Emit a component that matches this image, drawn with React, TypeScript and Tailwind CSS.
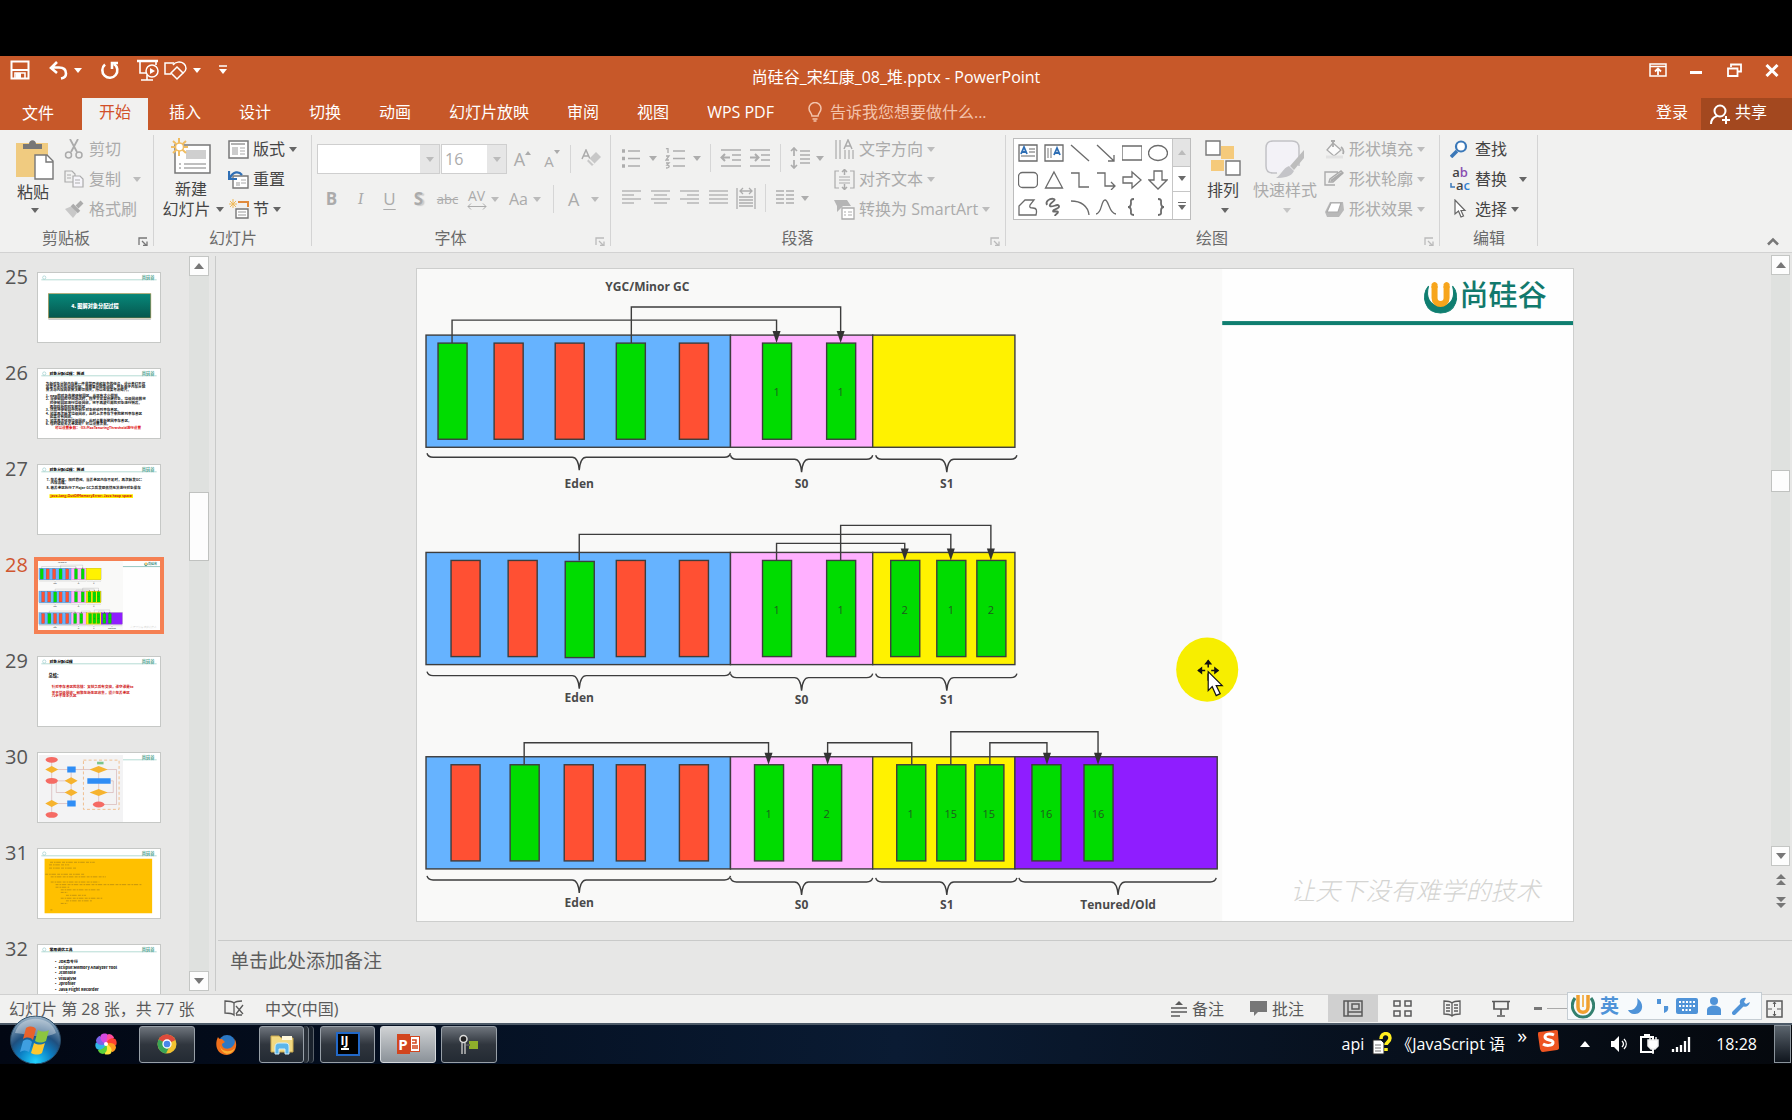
import React from "react";

type P = { className?: string };

const Svg = ({ w, h, className = "", children }: { w: number; h: number; className?: string; children: React.ReactNode }) => (
  <svg width={w} height={h} viewBox={`0 0 ${w} ${h}`} fill="none" stroke="currentColor" className={`shrink-0 ${className}`} aria-hidden="true">
    {children}
  </svg>
);

const Down = ({ className = "" }: P) => (
  <Svg w={8} h={5} className={className}><path d="M0 0h8L4 5z" fill="currentColor" stroke="none" /></Svg>
);
const Up = ({ className = "" }: P) => (
  <Svg w={10} h={6} className={className}><path d="M0 6h10L5 0z" fill="currentColor" stroke="none" /></Svg>
);
const Sep = ({ className = "" }: P) => <span className={`h-7 w-px shrink-0 bg-[#d6d6d6] ${className}`} />;

/* ---------- Title bar ---------- */

function TitleBar() {
  return (
    <div className="relative flex h-[42px] items-start text-white">
      <div className="flex h-[28px] items-center pl-[10px]">
        <button aria-label="保存">
          <Svg w={20} h={20}><path d="M1.500 1.500h17v17h-17z" strokeWidth="2" /><path d="M2 10h16" strokeWidth="2" /><path d="M5 18v-5h10v5" strokeWidth="1.600" /><path d="M6 13h5v5H6z" fill="currentColor" stroke="none" /></Svg>
        </button>
        <button aria-label="撤消" className="ml-[18px] flex items-center gap-[6px]">
          <Svg w={20} h={20}><path d="M9 2L3 8l6 5M3 7.500h8c4 0 7 2 7 6 0 3-2 4.500-5 5" strokeWidth="2.600" /></Svg>
          <Down className="text-white" />
        </button>
        <button aria-label="重复" className="ml-[18px]">
          <Svg w={20} h={20}><path d="M5 4.500A7.500 7.500 0 1 0 14 4M12 9V3h6" strokeWidth="2.600" /></Svg>
        </button>
        <button aria-label="从头开始" className="ml-[17px]">
          <Svg w={24} h={22}><path d="M0 2h21" strokeWidth="2.500" /><path d="M3 3v11h6M19 3v3" strokeWidth="1.600" /><circle cx="15" cy="12" r="6" strokeWidth="1.500" /><path d="M13 9l5 3-5 3z" fill="currentColor" stroke="none" /><path d="M10 16v5M4 21h12" strokeWidth="1.600" /></Svg>
        </button>
        <button aria-label="形状" className="ml-[3px] flex items-center gap-[5px]">
          <Svg w={24} h={22}><path d="M10 4H1v11h6" strokeWidth="1.500" /><path d="M9 6a7 6 0 1 1 10 8" strokeWidth="1.500" /><path d="M13 8l6 6-6 6-6-6z" strokeWidth="1.500" /></Svg>
          <Down />
        </button>
        <button aria-label="自定义快速访问工具栏" className="ml-[18px]">
          <Svg w={8} h={10}><path d="M0 1h8" strokeWidth="1.500" /><path d="M0 4h8L4 9z" fill="currentColor" stroke="none" /></Svg>
        </button>
      </div>
      <h1 className="pointer-events-none absolute inset-x-0 top-[9px] text-center text-[16px] leading-6">尚硅谷_宋红康_08_堆.pptx - PowerPoint</h1>
      <div className="ml-auto flex h-[28px] items-center pr-[13px]">
        <button aria-label="功能区显示选项" className="mr-[23px]">
          <Svg w={18} h={14}><path d="M1 1h16v12H1zM1 3.500h16" strokeWidth="1.500" /><path d="M9 12V6M6 8.500L9 5.500l3 3" strokeWidth="1.800" /></Svg>
        </button>
        <button aria-label="最小化" className="mr-[25px] pt-1"><Svg w={12} h={3}><path d="M0 1.500h12" strokeWidth="3" /></Svg></button>
        <button aria-label="还原" className="mr-[23px]">
          <Svg w={15} h={14}><path d="M4 4V1.500h10v7h-3" strokeWidth="1.800" /><path d="M1 5.500h9.500v7.500H1z" strokeWidth="1.800" /></Svg>
        </button>
        <button aria-label="关闭"><Svg w={14} h={13}><path d="M1.500 1l11 11M12.500 1l-11 11" strokeWidth="3" /></Svg></button>
      </div>
    </div>
  );
}

const tabs = ["开始", "插入", "设计", "切换", "动画", "幻灯片放映", "审阅", "视图", "WPS PDF"];

function Tabs() {
  return (
    <div className="flex h-8 items-stretch text-[16px] leading-[28px] text-white">
      <button className="w-[82px] pr-[6px] pb-[3px] text-center">文件</button>
      <nav className="flex gap-1">
        {tabs.map((t, i) => (
          <button key={t} className={i === 0 ? "bg-[#f1f1f0] px-[17px] pb-1 text-[#d2502a]" : "px-[17px] pb-1"}>{t}</button>
        ))}
      </nav>
      <label className="ml-[17px] flex items-center gap-2 pb-1 text-[#f3c3ac]">
        <Svg w={14} h={20}><path d="M4 14c0-3-3-4-3-7.500a6 6 0 0 1 12 0C13 10 10 11 10 14zM4.500 17h5M5.500 19h3" strokeWidth="1.500" /></Svg>
        <input aria-label="告诉我您想要做什么" placeholder="告诉我您想要做什么..." className="w-[180px] bg-transparent outline-none placeholder:text-[#f3c3ac]" />
      </label>
      <button className="ml-auto mr-[13px] pb-1">登录</button>
      <button className="flex w-[91px] items-center gap-[5px] bg-[#a3481f] pb-1 pl-[9px]">
        <Svg w={20} h={21} className="mt-1"><circle cx="10" cy="7" r="5.500" strokeWidth="2" /><path d="M1 20c0-5 3-7 6-8M12 16h8M16 12v8" strokeWidth="2" /></Svg>
        共享
      </button>
    </div>
  );
}

/* ---------- Ribbon ---------- */

function Group({ label, className, launcher, children }: { label: string; className: string; launcher?: string; children: React.ReactNode }) {
  return (
    <section aria-label={label} className={`relative flex shrink-0 flex-col ${className}`}>
      <div className="flex h-[94px] pt-1">{children}</div>
      <div className={`flex h-[29px] items-center justify-center text-[#6a6a6a] ${launcher ? "pr-[22px]" : ""}`}>{label}</div>
      {launcher && (
        <button aria-label={`${label}设置`} className={`absolute right-[6px] bottom-[6px] ${launcher}`}>
          <Svg w={10} h={9}><path d="M1 8V1h8M4 4l4 4M9 4.500V8.500H5" strokeWidth="1.300" /></Svg>
        </button>
      )}
      <span className="absolute top-[5px] right-0 h-[111px] w-px bg-[#d4d4d4]" />
    </section>
  );
}

function Cmd({ icon, text, arrow, off, gap = "ml-2" }: { icon: React.ReactNode; text: string; arrow?: boolean; off?: boolean; gap?: string }) {
  return (
    <button className={`flex h-[30px] items-center whitespace-nowrap ${off ? "text-[#ababab]" : "text-[#444]"}`}>
      <span className="flex w-[25px] shrink-0">{icon}</span>
      {text}
      {arrow && <Down className={`${gap} ${off ? "text-[#bcbcbc]" : "text-[#666]"}`} />}
    </button>
  );
}

const I = {
  cut: <Svg w={20} h={20}><path d="M6 0l7 13M14 0L7 13" strokeWidth="1.800" /><circle cx="4.500" cy="16" r="3" strokeWidth="1.500" /><circle cx="15" cy="16" r="3" strokeWidth="1.500" /></Svg>,
  copy: <Svg w={20} h={18}><path d="M1 1h7l3 3v8H1zM3 5h4M3 8h4" strokeWidth="1.200" /><path d="M9 6h7l3 3v8H9z" fill="#f6f5fa" strokeWidth="1.200" /><path d="M11 10h5M11 13h5" /></Svg>,
  brush: <Svg w={20} h={18}><path d="M1 9l7-3 5 7-4 5z" fill="#c8c8c8" stroke="none" /><path d="M8 5l7 7" strokeWidth="3.500" /><path d="M13 7l5-5" strokeWidth="4" /></Svg>,
  layout: <Svg w={21} h={19}><path d="M1 1h19v17H1z" fill="#fff" strokeWidth="1.500" stroke="#777" /><path d="M3 4h14" stroke="#999" strokeWidth="1.500" /><path d="M4 7h6v8H4z" fill="#ccc" stroke="none" /><path d="M12 8h5M12 11h5M12 14h5" stroke="#aaa" strokeWidth="1.200" /></Svg>,
  reset: <Svg w={21} h={19}><path d="M5 6h15v12H5z" fill="#fff" stroke="#777" strokeWidth="1.400" /><path d="M8 12h4v4H8z" fill="#ccc" stroke="none" /><path d="M13 10h5M13 13h5" stroke="#aaa" /><path d="M1 1v8h8M2 8c3-7 9-7 12-3" stroke="#2f6fb5" strokeWidth="2.200" /></Svg>,
  section: <Svg w={21} h={20}><path d="M5 0v9M1 5h8M2 2l6 6M8 2L2 8" stroke="#efb95a" /><path d="M10 3h10v5" stroke="#e08a3c" strokeWidth="2" /><path d="M8 10h12v9H8z" stroke="#777" strokeWidth="1.400" fill="#fff" /><path d="M10 13h8M10 16h8" stroke="#999" /></Svg>,
  dir: <Svg w={21} h={21}><path d="M2 1v19M6 1v19M11 11v9M15 11v9M19 11v9" strokeWidth="1.200" /><path d="M10 10l4-9 4 9M11.500 7h5" strokeWidth="1.500" /></Svg>,
  alignText: <Svg w={21} h={21}><path d="M5 2H1v17h4M16 2h4v17h-4M5 8h11M5 11h11M5 14h11" strokeWidth="1.200" /><path d="M10.500 6V1M8 3l2.500-2.500L13 3M10.500 15v5M8 18l2.500 2.500L13 18" strokeWidth="1.500" /></Svg>,
  smart: <Svg w={21} h={21}><path d="M0 1h13l4 6H9l-6 6V7z" fill="#b5b5b5" stroke="none" /><path d="M8 9h12v11H8z" fill="#fff" strokeWidth="1.300" /><path d="M10 13h2M14 13h4M10 16h2M14 16h4" /></Svg>,
  fill: <Svg w={21} h={20}><path d="M9 4l8 7-7 6-7-6z" fill="#fbfbfb" strokeWidth="1.300" /><path d="M9 8V1M7 2h4M17 8c3 2 3 4 2 7" strokeWidth="1.800" /><path d="M2 18h17" stroke="#e2e2e2" strokeWidth="3" /></Svg>,
  outline: <Svg w={21} h={19}><path d="M14 2H1v13h10M5 12l1-3 11-8 2 2L9 12z" strokeWidth="1.400" /><path d="M7 11l11-8" strokeWidth="2.500" /></Svg>,
  effect: <Svg w={21} h={19}><path d="M6 2h13l1 8-5 7H3L1 12z" fill="#b9b9b9" stroke="none" /><path d="M7 3h10l-3 9H3z" fill="#fff" strokeWidth="1.200" /></Svg>,
  find: <Svg w={18} h={18} className="text-[#3b78b8]"><circle cx="11" cy="6.500" r="5" strokeWidth="2.200" fill="#fff" /><path d="M7 11l-6 6" strokeWidth="3.500" /></Svg>,
  select: <Svg w={18} h={20}><path d="M5 1v14l3.500-3L11 18l2.500-1L11 11.500h4z" fill="#fff" stroke="#666" strokeWidth="1.200" /></Svg>,
  replace: (
    <span className="flex flex-col text-[13px] leading-[13px] font-semibold">
      <span>a<span className="text-[#8a4fb0]">b</span></span>
      <span className="flex items-center"><Svg w={6} h={6}><path d="M1 0v4h4" stroke="#3b78b8" strokeWidth="1.500" /></Svg>a<span className="text-[#2f7fd0]">c</span></span>
    </span>
  ),
};

const Lines = ({ rows }: { rows: [number, number][] }) => (
  <Svg w={20} h={18}>{rows.map(([a, b], i) => <path key={i} d={`M${a} ${2 + i * 4}H${b}`} strokeWidth="1.300" />)}</Svg>
);

function FontGroup() {
  return (
    <Group label="字体" className="w-[299px]" launcher="text-[#bbb]">
      <div className="flex flex-col gap-[10px] pt-[10px] pl-[5px] text-[#ababab]">
        <div className="flex h-[30px] items-center">
          <span className="relative flex h-[30px] w-[123px] border border-[#cfcfcf] bg-white">
            <select aria-label="字体名称" className="h-full w-full appearance-none bg-transparent pl-1"><option></option></select>
            <span className="pointer-events-none flex w-[19px] shrink-0 items-center justify-center bg-[#e6e6e6]"><Down className="text-[#bbb]" /></span>
          </span>
          <span className="relative ml-px flex h-[30px] w-[66px] border border-[#cfcfcf] bg-white">
            <select aria-label="字号" className="h-full w-full appearance-none bg-transparent pl-[3px] text-[16px]"><option>16</option></select>
            <span className="pointer-events-none flex w-[19px] shrink-0 items-center justify-center bg-[#e6e6e6]"><Down className="text-[#bbb]" /></span>
          </span>
          <button aria-label="增大字号" className="flex w-[31px] justify-center"><span className="text-[18px]">A</span><Svg w={6} h={4} className="mt-1"><path d="M0 4h6L3 0z" fill="currentColor" stroke="none" /></Svg></button>
          <button aria-label="减小字号" className="flex w-[28px] justify-center"><span className="pt-[3px] text-[15px]">A</span><Svg w={6} h={4} className="mt-1"><path d="M0 0h6L3 4z" fill="currentColor" stroke="none" /></Svg></button>
          <Sep className="mx-1" />
          <button aria-label="清除格式" className="ml-[6px]"><Svg w={20} h={20}><path d="M1 10L5 1l4 9M2.500 7h5" strokeWidth="1.500" /><path d="M6 12l9-9 5 5-9 9z" fill="#c8c8c8" stroke="none" /><path d="M8 10l5 5" stroke="#f1f1f0" strokeWidth="1.500" /></Svg></button>
        </div>
        <div className="flex h-[30px] items-center text-[17px]">
          <button aria-label="加粗" className="w-[29px] font-bold">B</button>
          <button aria-label="倾斜" className="w-[29px] font-serif italic">I</button>
          <button aria-label="下划线" className="w-[29px] underline underline-offset-4">U</button>
          <button aria-label="文字阴影" className="w-[29px] font-bold text-shadow-[2px_1px_1px_#ccc]">S</button>
          <button aria-label="删除线" className="w-[29px] text-[13px] line-through">abc</button>
          <button aria-label="字符间距" className="flex w-[29px] flex-col items-center text-[14px] leading-[14px]">AV<Svg w={20} h={7}><path d="M1 3.500h18M4 .5l-3 3 3 3M16 .5l3 3-3 3" /></Svg></button>
          <Down className="text-[#bbb]" />
          <button aria-label="更改大小写" className="ml-[10px] flex items-center gap-[5px] text-[16px]">Aa<Down className="text-[#bbb]" /></button>
          <Sep className="ml-[12px]" />
          <button aria-label="字体颜色" className="ml-[14px] flex items-center gap-3 text-[18px]">A<Down className="text-[#bbb]" /></button>
        </div>
      </div>
    </Group>
  );
}

function ParagraphGroup() {
  return (
    <Group label="段落" className="w-[395px]" launcher="text-[#bbb]">
      <div className="flex w-[223px] shrink-0 flex-col gap-[10px] pt-[9px] pl-[10px] text-[#adadad]">
        <div className="flex h-[30px] items-center">
          <button aria-label="项目符号" className="flex items-center gap-2"><Svg w={20} h={21}><path d="M7 3h12M7 10.500h12M7 18h12" strokeWidth="1.300" /><path d="M1 3h3M1 10.500h3M1 18h3" strokeWidth="3.500" /></Svg><Down /></button>
          <button aria-label="编号" className="ml-2 flex items-center gap-2">
            <Svg w={20} h={21}><path d="M8 3h12M8 10.500h12M8 18h12" strokeWidth="1.300" /><path d="M1 1l2-1v5M1 8h3l-3 4h3M1 15h3l-2 2c3 0 3 3-1 3" strokeWidth="1.300" /></Svg><Down />
          </button>
          <Sep className="mx-[9px]" />
          <button aria-label="减少缩进"><Svg w={22} h={20}><path d="M1 2h20M12 7h9M12 12h9M1 18h20" strokeWidth="1.300" /><path d="M10 9.500H2M5 6L1.500 9.500 5 13" strokeWidth="2" /></Svg></button>
          <button aria-label="增加缩进" className="ml-[7px]"><Svg w={22} h={20}><path d="M1 2h20M12 7h9M12 12h9M1 18h20" strokeWidth="1.300" /><path d="M1 9.500h8M6 6l3.500 3.500L6 13" strokeWidth="2" /></Svg></button>
          <Sep className="mx-[9px]" />
          <button aria-label="行距" className="flex items-center gap-[6px]"><Svg w={20} h={22}><path d="M4 1v8M1 4l3-3 3 3M4 13v8M1 18l3 3 3-3" strokeWidth="1.700" /><path d="M10 4h10M10 8h10M10 12h10M10 16h10" strokeWidth="1.300" /></Svg><Down /></button>
        </div>
        <div className="flex h-[30px] items-center">
          <button aria-label="左对齐" className="mr-[9px]"><Lines rows={[[1, 20], [1, 13], [1, 20], [1, 13]]} /></button>
          <button aria-label="居中" className="mr-[9px]"><Lines rows={[[1, 20], [4, 17], [1, 20], [4, 17]]} /></button>
          <button aria-label="右对齐" className="mr-[9px]"><Lines rows={[[1, 20], [8, 20], [1, 20], [8, 20]]} /></button>
          <button aria-label="两端对齐" className="mr-[8px]"><Lines rows={[[1, 20], [1, 20], [1, 20], [1, 20]]} /></button>
          <button aria-label="分散对齐"><Svg w={20} h={22}><path d="M1 1v21M19 1v21M4 4h12M7 1L4 4l3 3M13 1l3 3-3 3M3 10h14M3 13h14M3 16h14M3 19h14" strokeWidth="1.300" /></Svg></button>
          <Sep className="mx-[9px]" />
          <button aria-label="分栏" className="flex items-center gap-[6px]"><Svg w={20} h={18}><path d="M1 2h8M1 6h8M1 10h8M1 14h8M11 2h8M11 6h8M11 10h8M11 14h8" strokeWidth="1.500" /></Svg><Down /></button>
        </div>
      </div>
      <div className="flex flex-col">
        <Cmd off arrow gap="ml-1" icon={I.dir} text="文字方向" />
        <Cmd off arrow gap="ml-1" icon={I.alignText} text="对齐文本" />
        <Cmd off arrow gap="ml-1" icon={I.smart} text="转换为 SmartArt" />
      </div>
    </Group>
  );
}

const shapes: [string, React.ReactNode][] = [
  ["文本框", <><path d="M1 2h18v16H1z" /><path d="M3 11l3-7 3 7M4 9h4" stroke="#2f6fb5" strokeWidth="1.800" /><path d="M11 6h6M11 9h6M3 13h14" stroke="#999" /></>],
  ["竖排文本框", <><path d="M1 2h18v16H1z" /><path d="M4 5v10M7 5v10" stroke="#999" /><path d="M10 12l3-7 3 7M11 10h4" stroke="#2f6fb5" strokeWidth="1.800" /></>],
  ["直线", <path d="M1 2l18 16" />],
  ["箭头", <path d="M1 2l17 16M18 12v6h-6" />],
  ["矩形", <path d="M0 3h20v14H0z" />],
  ["椭圆", <ellipse cx="10" cy="10" rx="9.500" ry="7.500" />],
  ["圆角矩形", <rect x="0.500" y="2.500" width="19" height="15" rx="4" />],
  ["三角形", <path d="M10 2l8.500 16h-17z" />],
  ["肘形连接符", <path d="M1 3h8v14h10" />],
  ["肘形箭头", <path d="M1 3h8v13h10M15 12l4 4-4 4" />],
  ["右箭头", <path d="M1 7h9V2l9 8-9 8v-5H1z" />],
  ["下箭头", <path d="M6 1v9H1l9 9 9-9h-5V1z" />],
  ["任意多边形", <path d="M1 18V9l6-6h9l-4 5c-1 3 1 3 3 3 4 0 4 3 3 7z" />],
  ["自由曲线", <path d="M3 8c-2-4 3-7 7-6 3 1-6 5-4 7s8-3 9 0-6 3-6 5 5-1 5 1-3 2-3 4" strokeWidth="1.800" />],
  ["弧形", <path d="M1 4c10 0 17 5 18 14" />],
  ["曲线", <path d="M0 17C6 17 5 3 9 3s4 14 11 14" />],
  ["左大括号", <path d="M12 2c-4 0-3 2-3 4s0 4-3 4c3 0 3 2 3 4s-1 4 3 4" strokeWidth="1.800" />],
  ["右大括号", <path d="M10 2c4 0 3 2 3 4s0 4 3 4c-3 0-3 2-3 4s1 4-3 4" strokeWidth="1.800" />],
];

function DrawGroup() {
  return (
    <Group label="绘图" className="w-[434px]" launcher="text-[#bbb]">
      <div className="mt-1 ml-[7px] flex h-[82px] shrink-0 border border-[#bdbdbd] bg-white text-[#6b6b6b]">
        <div className="grid grid-cols-[repeat(6,26px)] px-px">
          {shapes.map(([n, d]) => (
            <button key={n} aria-label={n} className="flex h-[27px] items-center justify-center"><Svg w={20} h={20} className="[stroke-width:1.3]">{d}</Svg></button>
          ))}
        </div>
        <div className="grid w-[18px] grid-rows-3 border-l border-[#c6c6c6]">
          <button aria-label="上一行" className="flex items-center justify-center bg-[#e4e4e4] text-[#bbb]"><Down className="rotate-180" /></button>
          <button aria-label="下一行" className="flex items-center justify-center border-y border-[#c6c6c6]"><Down /></button>
          <button aria-label="其他" className="flex flex-col items-center justify-center gap-0.5"><span className="h-px w-2 bg-[#6b6b6b]" /><Down /></button>
        </div>
      </div>
      <button className="ml-[16px] flex w-[32px] shrink-0 flex-col items-center pt-[6px] text-[#444]">
        <Svg w={36} h={36}>
          <path d="M16 6h13v13H16zM6 20h13v11H6z" fill="#f5ca7b" stroke="none" />
          <path d="M1 1h14v14H1zM21 21h14v14H21z" fill="#fff" stroke="#777" strokeWidth="1.400" />
        </Svg>
        <span className="-mt-0.5 leading-8">排列</span>
        <Down className="mt-0.5 ml-1 text-[#666]" />
      </button>
      <button className="ml-[14px] flex w-[64px] shrink-0 flex-col items-center pt-[6px] whitespace-nowrap text-[#ababab]">
        <Svg w={40} h={38}>
          <path d="M12 33H8c-5 0-7-3-7-7V8c0-5 3-7 7-7h19c4 0 7 2 7 7v18" fill="#f3f2f7" stroke="#c2c2c6" strokeWidth="1.500" />
          <path d="M39 10v8L29 30l-4-4z" fill="#bdbdbd" stroke="none" /><path d="M24 26l5 5c-3 6-10 7-18 7 5-3 7-10 13-12z" fill="#c4c4c8" stroke="none" />
        </Svg>
        <span className="-mt-1 leading-8">快速样式</span>
        <Down className="mt-0.5 ml-1 text-[#c5c5c5]" />
      </button>
      <div className="ml-[7px] flex flex-col">
        <Cmd off arrow gap="ml-1" icon={I.fill} text="形状填充" />
        <Cmd off arrow gap="ml-1" icon={I.outline} text="形状轮廓" />
        <Cmd off arrow gap="ml-1" icon={I.effect} text="形状效果" />
      </div>
    </Group>
  );
}

function Ribbon() {
  return (
    <div className="relative flex h-[123px] overflow-hidden border-b border-[#d2d2d2] bg-[#f1f1f0] text-[16px] leading-6">
      <Group label="剪贴板" className="w-[154px]" launcher="text-[#777]">
        <button className="ml-4 flex w-[38px] flex-col items-center pt-[6px] text-[#444]">
          <Svg w={38} h={40}>
            <path d="M0 3h32v34H0z" fill="#f0cb80" stroke="none" />
            <path d="M7 9V4h6c0-5 7-5 7 0h6v5z" fill="#777" stroke="none" />
            <path d="M19 15h12l6 6v18H19z" fill="#fff" stroke="#777" strokeWidth="1.400" /><path d="M30 15v7h7" stroke="#777" strokeWidth="1.400" />
          </Svg>
          <span className="-mt-1 -ml-1 leading-8">粘贴</span>
          <Down className="text-[#666]" />
        </button>
        <div className="ml-[10px] flex flex-col">
          <Cmd off icon={I.cut} text="剪切" />
          <Cmd off arrow gap="ml-3" icon={I.copy} text="复制" />
          <Cmd off icon={I.brush} text="格式刷" />
        </div>
      </Group>
      <Group label="幻灯片" className="w-[158px]">
        <button className="ml-[5px] flex w-[64px] shrink-0 flex-col items-center pt-1 text-[#444]">
          <Svg w={40} h={37}>
            <path d="M4 7h35v28H4z" fill="#fff" stroke="#777" strokeWidth="1.500" />
            <path d="M15 12h20v9H15z" fill="#cfcfcf" stroke="none" /><path d="M8 26h2M13 26h22M8 30h2M13 30h22" stroke="#aaa" strokeWidth="1.400" />
            <path d="M8 0v18M0 9h17M2 3l13 12M15 3L2 15" stroke="#f0bd62" strokeWidth="2" /><circle cx="8.500" cy="9" r="4" fill="#fff" stroke="#f0bd62" strokeWidth="1.500" />
          </Svg>
          <span className="mt-1 leading-5">新建</span>
          <span className="flex items-center gap-[5px] pl-1 leading-5 whitespace-nowrap">幻灯片<Down className="text-[#666]" /></span>
        </button>
        <div className="ml-[5px] flex flex-col">
          <Cmd arrow icon={I.layout} text="版式" gap="ml-1" />
          <Cmd icon={I.reset} text="重置" />
          <Cmd arrow icon={I.section} text="节" gap="ml-1" />
        </div>
      </Group>
      <FontGroup />
      <ParagraphGroup />
      <DrawGroup />
      <Group label="编辑" className="w-[98px]">
        <div className="ml-[10px] flex flex-col">
          <Cmd icon={I.find} text="查找" />
          <Cmd arrow gap="ml-3" icon={I.replace} text="替换" />
          <Cmd arrow gap="ml-1" icon={I.select} text="选择" />
        </div>
      </Group>
      <button aria-label="折叠功能区" className="mt-auto mr-[13px] mb-[6px] ml-auto text-[#777]"><Svg w={12} h={9}><path d="M1 7.500l5-5 5 5" strokeWidth="2.500" /></Svg></button>
    </div>
  );
}

/* ---------- Slide drawing ---------- */

type Row = {
  top: number; bars: [number, string, string?, number?][]; links: [number, number, number][];
  braces: [number, number, number, string, number][]; tenured?: boolean;
};
const G = "#00dc00", R = "#ff5033";

const rows: Row[] = [
  {
    top: 335,
    bars: [[438, G], [494, R], [555, R], [616, G], [679, R], [762, G, "1"], [826, G, "1"]],
    links: [[452, 320, 776], [631, 307, 840]],
    braces: [[427, 730, 453, "Eden", 483], [730, 872, 455, "S0", 483], [875, 1016, 455, "S1", 483]],
  },
  {
    top: 552,
    bars: [[451, R], [508, R], [565, G, "", 1], [616, R], [679, R], [762, G, "1"], [826, G, "1"], [890, G, "2"], [936, G, "1"], [976, G, "2"]],
    links: [[579, 534, 950], [776, 543, 904], [840, 525, 990]],
    braces: [[427, 730, 671, "Eden", 696], [730, 872, 673, "S0", 698], [875, 1016, 673, "S1", 698]],
  },
  {
    top: 756,
    bars: [[451, R], [510, G], [564, R], [616, R], [679, R], [754, G, "1"], [812, G, "2"], [896, G, "1"], [936, G, "15"], [974, G, "15"], [1031, G, "16"], [1083, G, "16"]],
    links: [[524, 742, 768], [911, 742, 827], [950, 731, 1097], [989, 742, 1046]],
    braces: [[427, 730, 875, "Eden", 901], [730, 872, 877, "S0", 903], [875, 1016, 877, "S1", 903], [1018, 1215, 877, "Tenured/Old", 903]],
    tenured: true,
  },
];

function Slide({ cursor, className }: { cursor?: boolean; className: string }) {
  return (
    <svg viewBox="417 269 1155 651" className={className} role="img" aria-label="YGC/Minor GC" fontFamily="'Open Sans','Noto Sans CJK SC',sans-serif">
      <rect x="417" y="269" width="1155" height="651" fill="#fefefe" />
      <rect x="417" y="269" width="804" height="651" fill="#f9f9f8" />
      <text x="647" y="291" textAnchor="middle" fontSize="12" fontWeight="700" fill="#4a4a4a">YGC/Minor GC</text>
      {rows.map((r) => (
        <g key={r.top} stroke="#3d3d3d" strokeWidth="1.400">
          <rect x="426" y={r.top} width="304" height="112" fill="#66b3ff" />
          <rect x="730" y={r.top} width="142" height="112" fill="#ffb0ff" />
          <rect x="872" y={r.top} width="142" height="112" fill="#fff200" />
          {r.tenured && <rect x="1014" y={r.top} width="202" height="112" fill="#8f1dff" />}
          {r.bars.map(([x, c, n, dy = 0]) => (
            <g key={x}>
              <rect x={x} y={r.top + 8 + dy} width="29" height="96" fill={c} />
              {n && <text x={x + 14} y={r.top + 61} textAnchor="middle" fontSize="11" fill="#1f5a1f" stroke="none">{n}</text>}
            </g>
          ))}
          {r.links.map(([a, y, b]) => (
            <g key={a}>
              <path d={`M${a} ${r.top + 8}V${y}H${b}V${r.top + 4}`} fill="none" />
              <path d={`M${b - 4} ${r.top - 4}h8l-4 12z`} fill="#333" stroke="none" />
            </g>
          ))}
          {r.braces.map(([a, b, y, t, ly]) => {
            const m = Math.round((a + b) / 2);
            return (
              <g key={t}>
                <path d={`M${a} ${y}q1 4 6 4H${m - 7}q6 0 7 13q1-13 7-13H${b - 6}q5 0 6-4`} fill="none" />
                <text x={m} y={ly + 5} textAnchor="middle" fontSize="12" fontWeight="700" fill="#4a4a4a" stroke="none">{t}</text>
              </g>
            );
          })}
        </g>
      ))}
      <rect x="1221" y="321" width="351" height="4" fill="#0f7e70" />
      <path d="M1427 286c-8 9-4 27 12 27s20-18 12-27c3 11-1 20-12 20s-15-9-12-20z" fill="#0f7e70" stroke="#0f7e70" strokeWidth="1" />
      <path d="M1433 286v12c0 8 12 8 12 0v-12" fill="none" stroke="#f7a51c" strokeWidth="6" />
      <path d="M1430 284q3-4 6 0v4h-6zM1442 284q3-4 6 0v4h-6z" fill="#f7a51c" />
      <text x="1458" y="306" fontSize="29" fontWeight="500" fill="#12796c">尚硅谷</text>
      <text x="1289" y="899" fontSize="25" fontStyle="italic" fontWeight="300" fill="#d4d4d2">让天下没有难学的技术</text>
      {cursor && (
        <g>
          <ellipse cx="1206" cy="669" rx="31" ry="32" fill="#f7ee00" />
          <path d="M1207 660v20M1197 670h20" stroke="#111" strokeWidth="1.500" strokeDasharray="7 6" />
          <path d="M1203 664l4-5 4 5zM1201 666l-5 4 5 4zM1213 666l5 4-5 4z" fill="#111" />
          <path d="M1207 671v19l4-4 4 9 4-2-4-8h6z" fill="#fff" stroke="#111" strokeWidth="1.200" />
        </g>
      )}
    </svg>
  );
}

/* ---------- Thumbnails ---------- */

function Thumb({ title, children, back }: { title?: string; children: React.ReactNode; back?: React.ReactNode }) {
  return (
    <svg viewBox="0 0 372 213" className="block h-full w-full bg-white" fontFamily="'Noto Sans CJK SC',sans-serif" fontSize="11" fill="#222" aria-hidden="true">
      {back}
      <path d={title === undefined ? "M260 21h104" : "M8 21h356"} stroke="#8cc7bd" strokeWidth="2" />
      {title !== undefined && <circle cx="17" cy="14" r="5" fill="none" stroke="#9cc" strokeWidth="2" />}
      <text x="318" y="19" fontSize="13" fontWeight="700" fill="#5aa897">尚硅谷</text>
      <text x="33" y="19" fontSize="12" fontWeight="900" fill="#111">{title}</text>
      {children}
    </svg>
  );
}

const T = ({ x, y, c, children }: { x: number; y: number; c?: string; children: React.ReactNode }) => (
  <text x={x} y={y} fontWeight="700" fill={c}>{children}</text>
);

const slides: { n: number; body: React.ReactNode }[] = [
  {
    n: 25,
    body: (
      <Thumb title="">
        <defs><linearGradient id="banner" x1="0" y1="0" x2="0" y2="1"><stop offset="0" stopColor="#07887a" /><stop offset="1" stopColor="#06574e" /></linearGradient></defs>
        <rect x="30" y="64" width="316" height="75" fill="url(#banner)" stroke="#a98f45" strokeWidth="2" />
        <path d="M30 143h316" stroke="#ccc" strokeWidth="4" />
        <text x="100" y="108" fontSize="16" fontWeight="900" fill="#fff">4. 图解对象分配过程</text>
      </Thumb>
    ),
  },
  {
    n: 26,
    body: (
      <Thumb title="对象分配过程：概述">
        <T x={22} y={49}>为新对象分配内存是一件非常严谨和复杂的任务，设计者们不仅</T>
        <T x={22} y={58}>需要考虑内存如何分配、在哪里分配等问题，并且由于内存分配</T>
        <T x={22} y={67}>算法与内存回收算法密切相关，所以还需要考虑碎片。</T>
        <T x={22} y={86}>1. new的对象先放伊甸园区。此区有大小限制。</T>
        <T x={22} y={97}>2. 当伊甸园的空间填满时，程序又需要创建对象，垃圾回收器将</T>
        <T x={34} y={108}>对伊甸园区进行垃圾回收，将不再被引用的对象进行销毁。</T>
        <T x={34} y={119}>再加载新的对象放到区</T>
        <T x={22} y={130}>3. 然后将伊甸园中的剩余对象移动到幸存者区。</T>
        <T x={22} y={141}>4. 如果再次触发垃圾回收，此时上次幸存下来的放到幸存者区</T>
        <T x={34} y={152}>如果没有回收。</T>
        <T x={22} y={163}>5. 如果再次经历垃圾回收，此时会重新放回幸存者区。</T>
        <T x={22} y={174}>6. 啥时候能去养老区呢？可以设置次数。</T>
        <T x={50} y={186} c="#e01010">可以设置参数：-XX:MaxTenuringThreshold进行设置</T>
      </Thumb>
    ),
  },
  {
    n: 27,
    body: (
      <Thumb title="对象分配过程：概述">
        <T x={24} y={49}>7. 在养老区，相对悠闲。当养老区内存不足时，再次触发GC：</T>
        <T x={36} y={60}>内存清理。</T>
        <T x={24} y={74}>8. 若养老区执行了Major GC之后发现依然无法进行对象保存</T>
        <path d="M33 90h258v12H33z" fill="#ffee00" />
        <T x={36} y={100} c="#d02010">java.lang.OutOfMemoryError: Java heap space</T>
      </Thumb>
    ),
  },
  { n: 28, body: <Slide className="block h-full w-full" /> },
  {
    n: 29,
    body: (
      <Thumb title="对象分配过程">
        <text x="30" y="62" fontSize="13" fontWeight="900">总结：</text>
        <T x={40} y={97} c="#d02020">针对幸存者区的总结：复制之后有交换，谁空谁是to</T>
        <T x={40} y={114} c="#d02020">关于垃圾回收：频繁在新生区收集，很少在养老区</T>
        <T x={40} y={125} c="#d02020">几乎不在永久区</T>
      </Thumb>
    ),
  },
  {
    n: 30,
    body: (
      <Thumb back={<path d="M0 6h260v207H0z" fill="#f3f3f4" />}>
        <g fill="none" stroke="#c99" strokeWidth="1.500">
          <path d="M40 26v165M40 51h145M100 51v105M40 86h60M40 156h60M54 86v36h46M185 51v108M185 51h55v108h-55M220 86h10v36h-45" />
          <path d="M138 22h110v152H138z" stroke="#f0a45a" strokeWidth="2" strokeDasharray="9 7" />
        </g>
        <g fill="#f56b64"><ellipse cx="40" cy="21" rx="19" ry="9" /><ellipse cx="40" cy="86" rx="19" ry="9" /><ellipse cx="40" cy="191" rx="19" ry="9" /><ellipse cx="185" cy="159" rx="18" ry="9" /></g>
        <g fill="#f6b32e"><path d="M20 51l20-11 20 11-20 11zM20 156l20-11 20 11-20 11zM80 86l20-11 20 11-20 11zM80 122l20-11 20 11-20 11zM157 51l28-11 28 11-28 11zM157 122l28-11 28 11-28 11z" /></g>
        <g fill="#2f8df5"><path d="M88 42h26v18H88zM88 147h26v18H88zM150 78h72v17h-72z" /></g>
        <path d="M180 27h20v8h-20z" fill="#7cc48a" />
      </Thumb>
    ),
  },
  {
    n: 31,
    body: (
      <Thumb title="">
        <path d="M18 30h332v168H18z" fill="#ffc000" />
        <g stroke="#a87f12" strokeWidth="2" strokeDasharray="9 3 5 2 14 4">
          <path d="M35 41h138M32 49h62M32 59h86M20 78h120M37 86h170M37 102h150M52 110h265M52 118h42M68 126h120M68 134h20M84 143h62M68 152h130M84 160h80M68 168h20M36 188h6" />
        </g>
      </Thumb>
    ),
  },
  {
    n: 32,
    body: (
      <Thumb title="常用调优工具">
        {["JDK命令行", "Eclipse:Memory Analyzer Tool", "Jconsole", "VisualVM", "Jprofiler", "Java Flight Recorder", "GCViewer"].map((t, i) => (
          <text key={t} x="46" y={57 + i * 17} fontSize="12" fontWeight="900">• {t}</text>
        ))}
      </Thumb>
    ),
  },
];

function ScrollButton({ label, down }: { label: string; down?: boolean }) {
  return (
    <button aria-label={label} className="flex h-5 w-full shrink-0 items-center justify-center border border-[#c4c6c4] bg-[#fdfdfd] text-[#777]">
      <Up className={down ? "rotate-180" : ""} />
    </button>
  );
}

function Sidebar() {
  return (
    <aside className="flex w-[216px] shrink-0 pt-[3px] pb-[3px]">
      <div className="-mb-[3px] min-h-0 flex-1 overflow-hidden">
        <ol className="flex flex-col gap-[19px] pt-[13px]">
          {slides.map(({ n, body }) => {
            const on = n === 28;
            return (
              <li key={n} className="flex">
                <span className={`w-[34px] shrink-0 pl-[5px] text-[20px] leading-4 ${on ? "text-[#d0562f]" : "text-[#555]"}`}>{n}</span>
                <button aria-label={`幻灯片 ${n}`} className={`h-[77px] w-[130px] shrink-0 ${on ? "border-4 border-[#f58053] bg-white" : "p-[3px]"}`}>
                  <span className={`block h-full w-full overflow-hidden ${on ? "" : "border border-[#c6c8c6]"}`}>{body}</span>
                </button>
              </li>
            );
          })}
        </ol>
      </div>
      <div className="mr-[6px] flex w-5 shrink-0 flex-col bg-[#dfe1df]">
        <ScrollButton label="缩略图向上滚动" />
        <div className="flex-[217]" />
        <div className="h-[69px] border border-[#c0c2c0] bg-[#fdfdfd]" />
        <div className="flex-[411]" />
        <ScrollButton label="缩略图向下滚动" down />
      </div>
      <span className="w-px bg-[#c9cac9]" />
    </aside>
  );
}

function Workspace() {
  return (
    <main className="flex min-w-0 flex-1 flex-col">
      <div className="flex min-h-0 flex-1">
        <div className="flex min-w-0 flex-1 justify-center pt-[15px] pb-[18px] pl-[3px]">
          <div className="aspect-[1157/653] h-full border border-[#cdcecd]">
            <Slide cursor className="block h-full w-full" />
          </div>
        </div>
        <div className="mr-[2px] flex w-[19px] shrink-0 flex-col pt-[2px] pb-8">
          <div className="flex flex-1 flex-col bg-[#dfe1df]">
            <ScrollButton label="上一屏" />
            <div className="flex-[195]" />
            <div className="h-[22px] border border-[#c0c2c0] bg-[#fdfdfd]" />
            <div className="flex-[353]" />
            <ScrollButton label="下一屏" down />
          </div>
          <button aria-label="上一张幻灯片" className="mt-2 flex justify-center text-[#777]"><Svg w={10} h={11}><path d="M0 5h10L5 0zM0 11h10L5 6z" fill="currentColor" stroke="none" /></Svg></button>
          <button aria-label="下一张幻灯片" className="mt-3 flex justify-center text-[#777]"><Svg w={10} h={11}><path d="M0 0h10L5 5zM0 6h10l-5 5z" fill="currentColor" stroke="none" /></Svg></button>
        </div>
      </div>
      <div className="ml-[2px] h-[54px] border-t border-[#c9cac9] pl-3">
        <input aria-label="备注" placeholder="单击此处添加备注" className="h-[40px] w-full bg-transparent text-[19px] outline-none placeholder:text-[#5c5c5c]" />
      </div>
    </main>
  );
}

/* ---------- Status bar ---------- */

function StatusBar() {
  return (
    <footer className="flex h-[29px] items-center border-t border-[#d0d0d0] bg-[#f1f1f0] pb-px text-[16px] text-[#5a5a5a]">
      <span className="ml-[9px] w-[215px] shrink-0 whitespace-nowrap">幻灯片 第 28 张，共 77 张</span>
      <button aria-label="拼写检查"><Svg w={21} h={17}><path d="M10 15c-2-2-5-2-9-2V1c4 0 7 0 9 2zM10 15V3c2-2 4-2 8-2M12 15h6M12 6l7 8M19 5l-7 9" strokeWidth="1.300" /></Svg></button>
      <button className="ml-[20px] whitespace-nowrap">中文(中国)</button>
      <div className="ml-auto flex h-full items-center">
        <button className="flex items-center gap-[5px]"><Svg w={16} h={17}><path d="M4 5h8L8 1z" fill="currentColor" stroke="none" /><path d="M0 8h16M0 12h16M0 16h9" strokeWidth="1.500" /></Svg>备注</button>
        <button className="ml-[26px] flex items-center gap-[5px]"><Svg w={17} h={15}><path d="M0 0h17v11H8l-4 4v-4H0z" fill="#777" stroke="none" /></Svg>批注</button>
        <button aria-label="普通视图" className="ml-[24px] flex h-full w-[50px] items-center justify-center bg-[#d0d0d0]"><Svg w={20} h={17}><path d="M1 1h18v15H1zM5 1v15M5 12h14M9 4h7v5H9z" strokeWidth="1.500" /></Svg></button>
        <button aria-label="幻灯片浏览" className="ml-[15px]"><Svg w={19} h={17}><path d="M1 1h6v5H1zM12 1h6v5h-6zM1 11h6v5H1zM12 11h6v5h-6z" strokeWidth="1.500" /></Svg></button>
        <button aria-label="阅读视图" className="ml-[31px]"><Svg w={18} h={17}><path d="M9 3C7 1 4 1 1 1v13c3 0 6 0 8 2 2-2 5-2 8-2V1c-3 0-6 0-8 2zv13M3 5h4M3 8h4M3 11h4M11 5h4M11 8h4M11 11h4" strokeWidth="1.300" /></Svg></button>
        <button aria-label="幻灯片放映" className="ml-[31px]"><Svg w={18} h={17}><path d="M0 1.500h18M2 2v7h14V2M9 9v6M5 16h8" strokeWidth="1.700" /></Svg></button>
        <button aria-label="缩小" className="ml-[24px] h-[3px] w-2 bg-[#777]" />
        <span className="ml-[5px] h-px w-5 bg-[#aaa]" />
        <div className="mb-[5px] flex h-[28px] w-[195px] items-center border border-[#c5cdd3] bg-[#f7fafc] pl-[3px] text-[#4f93d8]">
          <Svg w={24} h={26}><path d="M4 5c-6 8-1 19 8 19s14-11 8-19" stroke="#33806f" strokeWidth="3" /><path d="M7 2v12c0 7 10 7 10 0V2" stroke="#f0a030" strokeWidth="3.500" /><path d="M12 2v12" stroke="#f3b75b" strokeWidth="2" /></Svg>
          <button className="ml-[5px] text-[19px] leading-6 font-bold">英</button>
          <button aria-label="半角" className="ml-[8px]"><Svg w={17} h={18}><path d="M10 1c9 6 5 17-3 16-3 0-5-2-6-4 7 1 11-5 9-12z" fill="currentColor" stroke="none" /></Svg></button>
          <button aria-label="标点" className="ml-[12px]"><Svg w={13} h={16}><path d="M1 1h4v5H1zM8 8h4c1 4-1 6-4 7z" fill="currentColor" stroke="none" /></Svg></button>
          <button aria-label="软键盘" className="ml-[7px]"><Svg w={22} h={16}><rect width="22" height="16" rx="2" fill="currentColor" stroke="none" /><path d="M3 4h16M3 8h16M6 12h10" stroke="#fff" strokeWidth="2" strokeDasharray="2 1.500" /></Svg></button>
          <button aria-label="用户" className="ml-[9px]"><Svg w={14} h={18}><circle cx="7" cy="4" r="4" fill="currentColor" stroke="none" /><path d="M0 18v-5c0-6 14-6 14 0v5z" fill="currentColor" stroke="none" /></Svg></button>
          <button aria-label="工具" className="ml-[11px]"><Svg w={19} h={18}><path d="M2 16l8-8" strokeWidth="4" strokeLinecap="round" /><path d="M14 1c-5-1-8 4-5 7s8 2 9-3l-4 2-2-2z" fill="currentColor" stroke="none" /></Svg></button>
        </div>
        <button aria-label="适应窗口" className="mr-[9px] ml-[4px]"><Svg w={17} h={18}><path d="M1 1h15v16H1z" strokeWidth="1.500" /><path d="M8.500 2v5M8.500 11v5M2 9h4M11 9h4M7 4l1.500-2L10 4M7 14l1.500 2L10 14" /></Svg></button>
      </div>
    </footer>
  );
}

/* ---------- Task bar ---------- */

const task = "flex h-[37px] shrink-0 items-center justify-center rounded-[3px] border border-[#98a0a8] bg-linear-to-b from-[#6f757d] via-[#30363e] to-[#232a33]";

function Wheel() {
  const c = ["#ff4d9d", "#ff4030", "#ff9a1f", "#ffe83b", "#5bd13a", "#2fb7e8", "#7b62ea", "#d54ae0"];
  return (
    <Svg w={22} h={22}>
      {c.map((f, i) => <path key={f} d="M11 11C9 7 10 2 14 1c3 0 5 3 5 4z" fill={f} stroke="none" transform={`rotate(${i * 45} 11 11)`} />)}
      <circle cx="11" cy="11" r="2" fill="#fff" stroke="none" />
    </Svg>
  );
}

function TaskBar() {
  return (
    <div className="relative flex h-[41px] items-center border-t-2 border-[#4d5a68] bg-linear-to-r from-[#020713] via-[#0a1b33] to-[#05080d] pb-px text-[16px] text-white">
      <button aria-label="开始菜单" className="absolute -top-[9px] left-[10px]">
        <svg width="51" height="48" viewBox="0 0 51 48" aria-hidden="true">
          <defs><radialGradient id="orb" cx="50%" cy="95%" r="95%"><stop offset="0" stopColor="#22d3ff" /><stop offset=".35" stopColor="#0c7fc4" /><stop offset=".6" stopColor="#1f4f7e" /><stop offset="1" stopColor="#9fb6c8" /></radialGradient></defs>
          <ellipse cx="25.500" cy="24" rx="25" ry="24" fill="url(#orb)" stroke="#284a66" />
          <path d="M5 17C10-2 41-2 46 17c-12 7-28 1-41 0z" fill="#fff" opacity=".35" />
          <path d="M16 12c4-2 7-2 10 1l-3 11c-3-3-6-3-10-1z" fill="#e8622c" /><path d="M28 14c4 2 7 2 11 0l-3 11c-4 2-7 2-11 0z" fill="#8dc63f" />
          <path d="M13 25c4-2 6-2 9 1l-3 10c-3-2-6-2-9 0z" fill="#3f9fe0" /><path d="M24 27c4 2 7 2 11 0l-3 10c-3 2-7 2-11 0z" fill="#fdc82f" />
        </svg>
      </button>
      <button aria-label="浏览器" className="ml-[95px]"><Wheel /></button>
      <button aria-label="Chrome" className={`ml-[22px] w-[56px] ${task}`}>
        <Svg w={20} h={20}><circle cx="10" cy="10" r="9.500" fill="#f2c230" stroke="none" /><path d="M10 10L1.500 5.500A9.500 9.500 0 0 1 18.500 6z" fill="#df4a3c" stroke="none" /><path d="M10 10L1.700 5.500A9.500 9.500 0 0 0 9 19.500l4-8z" fill="#3aa556" stroke="none" /><circle cx="10" cy="10" r="4" fill="#4a86e8" stroke="#fff" strokeWidth="1.300" /></Svg>
      </button>
      <button aria-label="Firefox" className="ml-[21px]">
        <Svg w={21} h={21}><circle cx="11" cy="9.500" r="8.500" fill="#2c78c4" stroke="none" /><path d="M2 3c1 2 2 2 4 2l3 3-3 2c0 5 6 6 10 3s3-7 2-9c4 5 3 16-7 17C1 21-2 11 2 3z" fill="#f0701c" stroke="none" /><path d="M4 12c2 6 10 7 15 2-3 8-13 8-15-2z" fill="#fbb034" stroke="none" /></Svg>
      </button>
      <button aria-label="资源管理器" className={`ml-[22px] w-[45px] ${task}`}>
        <Svg w={24} h={22}><path d="M1 3h8l2 2h12v14H1z" fill="#f2d981" stroke="#caa94f" /><path d="M12 3h10v4H12z" fill="#fff8dc" stroke="none" /><path d="M5 21v-7c0-3 2-4 4-4h6c3 0 4 1 4 4v7h-4v-5H9v5z" fill="#5cb6ea" stroke="#d3effd" /></Svg>
      </button>
      <span className="h-[37px] w-[5px] rounded-r border-r border-[#7a828a] bg-[#2a313a]" />
      <span className="h-[37px] w-[5px] rounded-r border-r border-[#5a626a] bg-[#1a222c]" />
      <button aria-label="IntelliJ IDEA" className={`ml-[6px] w-[55px] ${task}`}>
        <span className="flex h-6 w-6 flex-col border-2 border-[#2268c8] bg-black pt-px pl-[3px] text-left text-[12px] leading-[12px] font-bold">IJ<span className="mt-px h-[2px] w-2 bg-white" /></span>
      </button>
      <button aria-label="PowerPoint" className="ml-[5px] flex h-[37px] w-[56px] items-center justify-center rounded-[3px] border border-[#d6dade] bg-linear-to-b from-[#d0d2d4] to-[#8b9299]">
        <span className="flex h-5 w-[13px] items-center justify-center bg-[#d2451e] text-[15px] font-bold">P</span>
        <span className="flex h-4 w-[10px] items-center justify-center border border-[#d2451e] bg-white"><Svg w={7} h={10}><path d="M1 1h4v3H1M1 7h6M1 9h6" stroke="#d2451e" strokeWidth="1.500" /></Svg></span>
      </button>
      <button aria-label="录屏工具" className={`ml-[5px] w-[56px] ${task}`}>
        <Svg w={20} h={21}><path d="M3 9v11M6 9v11" stroke="#bbb" strokeWidth="1.500" /><circle cx="4.500" cy="5" r="3.500" fill="#222" stroke="#ddd" strokeWidth="1.500" /><path d="M10 7h9v8h-9z" fill="#8fae2b" stroke="none" /><path d="M7 11h4" stroke="#555" strokeWidth="2" /></Svg>
      </button>
      <div className="ml-auto flex shrink-0 items-center">
        <span>api</span>
        <Svg w={20} h={24} className="ml-[8px]"><path d="M1 8h8l3 3v11H1z" fill="#fff" stroke="#222" /><path d="M3 13h6M3 16h6M3 19h6" stroke="#777" /><path d="M9 7c0-7 9-7 9-1 0 4-4 4-4 7M14 16v3" stroke="#ffee20" strokeWidth="3.500" /></Svg>
        <span className="ml-1 w-[112px] overflow-hidden whitespace-nowrap">《JavaScript 语</span>
        <span className="ml-[9px] pb-4 text-[20px] leading-5">»</span>
        <Svg w={22} h={24} className="mb-[6px] ml-[11px]"><path d="M1 3l17-2c2 0 2 1 2 3l1 14c0 2 0 2-2 3l-14 2c-2 0-2-1-3-3L0 6c0-2 0-3 1-3z" fill="#ee5421" stroke="none" /><path d="M16 6c-4-2-9-1-9 2 0 4 9 2 8 6-1 3-7 3-10 1" stroke="#fff" strokeWidth="3" /></Svg>
        <button aria-label="显示隐藏的图标" className="ml-[20px]"><Up /></button>
        <button aria-label="音量" className="ml-[20px]"><Svg w={18} h={18}><path d="M1 6h3l5-5v16l-5-5H1z" fill="#fff" stroke="none" /><path d="M12 6c2 2 2 4 0 6M14 4c3 3 3 7 0 10" strokeWidth="1.300" /></Svg></button>
        <Svg w={19} h={20} className="ml-[12px]"><path d="M1 3h12v15H1zM4 1h6" strokeWidth="2" /><path d="M8 6h10v6l-3 3h-4l-3-3zM10 3v3M16 3v3M13 15v5" fill="#fff" stroke="#eee" strokeWidth="1.500" /></Svg>
        <Svg w={20} h={15} className="ml-[12px]"><path d="M2 15v-3M6 15v-5M10 15V8M14 15V4M18 15V0" strokeWidth="2.300" /></Svg>
        <time className="ml-[25px]">18:28</time>
        <button aria-label="显示桌面" className="mr-px ml-[17px] h-[38px] w-[17px] border border-[#8b949c] bg-linear-to-b from-[#5c656e] to-[#10161e]" />
      </div>
    </div>
  );
}

export default function App() {
  return (
    <div className="flex h-screen w-full flex-col overflow-hidden bg-black py-14 font-['Open_Sans','Noto_Sans_CJK_SC',sans-serif]">
      <header className="shrink-0 bg-[#c75829]">
        <TitleBar />
        <Tabs />
      </header>
      <div className="shrink-0"><Ribbon /></div>
      <div className="flex min-h-0 flex-1 bg-[#e7e7e6]">
        <Sidebar />
        <Workspace />
      </div>
      <div className="shrink-0"><StatusBar /><TaskBar /></div>
    </div>
  );
}
